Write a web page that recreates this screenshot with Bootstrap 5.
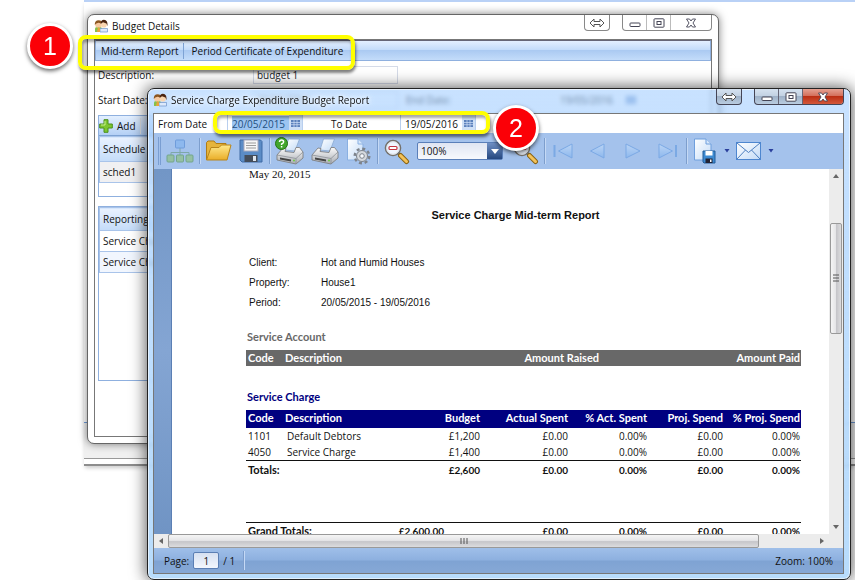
<!DOCTYPE html>
<html lang="en">
<head>
<meta charset="utf-8">
<meta name="viewport" content="width=device-width, initial-scale=1">
<title>Budget Details</title>
<link href="https://cdn.jsdelivr.net/npm/bootstrap@5.3.0/dist/css/bootstrap.min.css" rel="stylesheet">
<style>
  :root { --line: #8fb0df; --ui: "Open Sans", "Noto Sans", sans-serif; --calc: Lato, "Open Sans", sans-serif; }
  body { font-family: var(--ui); font-size: 10px; line-height: 16px; color: #111; background: #fff; }
  button, input, select { font: inherit; color: inherit; }
  svg { display: block; }
  .desk { min-height: 100vh; overflow: hidden; }
  .plain-btn { border: 0; background: none; padding: 0; }

  /* windows */
  .backwin { top: 0; left: 84px; right: 0; height: 466px; border-top: 2px solid #b9d1f6; border-bottom: 2px solid #8d8d8d; box-shadow: 0 3px 4px -1px #ccc; }
  .backwin-foot { height: 37px; border-top: 1px solid #6f9bd8; border-bottom: 1px solid #999; background: #f0f0f0; margin-bottom: 5px; }
  .win { border: 1px solid #444; border-radius: 7px; }
  .win-budget { top: 14px; left: 87px; right: 136px; height: 430px; background: #fff; border-color: #666; padding: 0 6px 6px; box-shadow: 0 0 8px rgba(0,0,0,.5); }
  .win-report { top: 88px; left: 147px; right: 4px; bottom: 0; padding: 0 6px 5px 5px; border-color: #222;
    background: linear-gradient(rgba(164,206,255,.6), rgba(172,212,255,.74) 25%, rgba(180,218,252,.95)); backdrop-filter: blur(2px);
    box-shadow: 0 0 16px 1px rgba(0,0,0,.65), inset 0 0 0 1px rgba(255,255,255,.6); }
  .titlebar { height: 24px; font-size: 10px; }
  .caption { padding-bottom: 2px; }
  .win-report .titlebar { text-shadow: 0 0 4px #fff, 0 0 6px #fff; }
  .client { border: 1px solid #777; background: #fff; min-height: 0; }
  .ctl { height: 16px; border: 1px solid #888; border-top: 0; border-radius: 0 0 4px 4px; overflow: hidden; }
  .ctl button { width: 24px; border-right: 1px solid #bbb; display: flex; align-items: center; justify-content: center; }
  .ctl button:last-child { border-right: 0; }
  .ctl .wide { width: 40px; }
  .glass { border-color: #445; background: linear-gradient(#d5e2f0, #c3d2e3 45%, #9fb2c8 50%, #b9cce0); }
  .glass button { border-color: #667; }
  .glass .close-red { background: linear-gradient(#e5a192, #d4705c 45%, #bb2f14 50%, #d3573a); }

  /* budget form */
  .menu-strip { height: 21px; border: 1px solid var(--line); border-top-color: #667; background: linear-gradient(#e3efff, #c4dcfa 45%, #abcaf2 50%, #c3dcfa); }
  .menu-strip .plain-btn { padding: 0 4px 0 5px; }
  .menu-strip .plain-btn + .plain-btn { border-left: 1px solid #7da2d4; padding-left: 8px; }
  .form-grid { display: grid; grid-template-columns: 155px 145px 162px auto; row-gap: 7px; align-items: center; padding: 5px 4px 0 3px; }
  .form-grid .form-control { height: 18px; padding: 0 3px; border: 1px solid #d5dbe8; border-radius: 0; font-size: 10px; line-height: 16px; }
  .panel { border: 1px solid var(--line); margin: 0 4px 0 3px; }
  .panel-tools { height: 20px; background: linear-gradient(#e3efff, #b4d0f5); border-bottom: 1px solid #7da2d4; }
  .list { width: 100%; margin: 0; }
  .list th, .list td { padding: 2px 3px; font-weight: 400; border: 1px solid #a9c4ea; }
  .list th { background: linear-gradient(#e9f2ff, #c4dcf9); padding-top: 3px; padding-bottom: 3px; }
  .list .alt { background: #f1f6fe; }
  .schedules { height: 82px; margin-top: 6px; }
  .schedules th { padding-top: 4px; padding-bottom: 4px; }
  .schedules .alt { background: #f0f0f2; }
  .reporting { height: 175px; margin-top: 9px; }

  /* report viewer */
  .range-row { height: 20px; }
  .range-row label:first-child { width: 73px; padding-left: 4px; }
  .range-row .to { width: 97px; padding-left: 28px; }
  .date-box { width: 76px; border: 1px solid #b9cfee; border-width: 0 1px; height: 18px; }
  .date-box input { width: 57px; border: 0; padding: 0; margin-left: 4px; height: 15px; }
  .date-box .picked { background: #9cc5f2; color: #24507f; }
  .date-box button { width: 14px; background: #cfe0f6; height: 100%; padding-left: 2px; }
  .tools { height: 36px; background: #a4c2ec; gap: 5px; padding-left: 4px; }
  .tools .plain-btn { flex: none; }
  .tools .pale { opacity: .7; }
  .grip { width: 3px; height: 28px; border: 1px solid #7a9ed2; border-width: 0 1px; }
  .rule { width: 1px; height: 26px; background: #7d9ecd; box-shadow: 1px 0 #c5d9f5; flex: none; }
  .zoom-box { width: 86px; height: 18px; border: 1px solid #5a7fb9; border-radius: 2px; margin-left: 2px; background: linear-gradient(#dfe5f2, #f7f9fd); }
  .zoom-box select { appearance: none; border: 0; background: none; padding: 0 3px; width: 68px; outline: 0; }
  .zoom-box span { width: 15px; background: linear-gradient(#6f8fc4, #25477f); }
  .canvas { background: linear-gradient(#7296c6, #84a5d3 50%, #7094c4); padding-left: 17px; border-right: 0; }
  .sheet { background: #fff; border-left: 1px solid #5b7fb4; padding: 0 28px 0 74px; }
  .stamp { font-family: "Liberation Serif", serif; font-size: 11px; line-height: 10px; padding-left: 3px; }
  .sheet h1 { font: bold 11px/16px "Liberation Sans", sans-serif; margin: 28px 0 32px; padding-right: 16px; }
  .facts { font-family: "Liberation Sans", sans-serif; font-size: 10px; display: grid; grid-template-columns: 72px auto; row-gap: 4px; line-height: 16px; padding-left: 3px; margin: 0; }
  .facts dt { font-weight: 400; }
  .facts dd { margin: 0; }
  .sheet h2 { font: bold 11px/14px var(--calc); margin: 19px 0 6px; padding-left: 1px; }
  .sheet .ink-gray { color: #686868; }
  .sheet .ink-navy { color: #000080; margin-top: 24px; }
  .ledger { width: 100%; table-layout: fixed; margin: 0; line-height: 16px; border-collapse: collapse; }
  .ledger th, .ledger td { padding: 0 2px; white-space: nowrap; }
  .ledger thead th { color: #fff; font: bold 11px/16px var(--calc); }
  .ledger .num:last-child { padding-right: 1px; }
  .gray thead { background: #686868; }
  .navy thead { background: #000080; }
  .navy thead tr { border-bottom: 2px solid #000080; }
  .ledger .num { text-align: right; }
  .ledger td:nth-child(2) { padding-left: 4px; }
  .sums { border-top: 1px solid #111; }
  .sums th { font: bold 11px/18px var(--calc); }
  .sums td { font: bold 10px/18px var(--calc); }
  .grand { margin-top: 43px; }
  .grand .sums th, .grand .sums td { line-height: 16px; }
  .c-code { width: 37px; } .c-budget { width: 80px; } .c-actual { width: 88px; }
  .c-pact { width: 79px; } .c-proj, .c-pproj { width: 76px; }
  .c-raised { width: 120px; } .c-paid { width: 200px; } .c-total { width: 124px; } .c-label { width: 100px; }

  /* scroll bars and status */
  .vbar { width: 14px; background: #ececec; flex: none; padding: 0 1px; }
  .hbar { height: 14px; background: #ececec; flex: none; padding-right: 14px; }
  .vbar button, .hbar button { width: 14px; height: 14px; display: flex; align-items: center; justify-content: center; flex: none; }
  .vbar button { width: 12px; }
  .gap-a { flex: 40; } .thumb-v { flex: 110; } .gap-b { flex: 187; }
  .thumb-v, .thumb-h { border: 1px solid #999; border-radius: 2px; display: flex; align-items: center; justify-content: center; }
  .thumb-v { background: linear-gradient(90deg, #f5f5f5, #e6e6e8 45%, #c6c6ca 55%, #dcdcde); }
  .thumb-h { flex: 591; background: linear-gradient(#f5f5f5, #e6e6e8 45%, #c6c6ca 55%, #dcdcde); }
  .gap-c { flex: 56; }
  .status { height: 25px; background: linear-gradient(#9fbfe9, #8db0df 48%, #7fa3d3 52%, #86a8d6); padding: 0 10px; }
  .status input { width: 26px; height: 17px; border: 1px solid #5b7fb4; border-radius: 2px; background: linear-gradient(#d6e0f1, #f3f7fd); text-align: center; padding: 0; }

  /* callouts */
  .ring { border: 4px solid #ff0; border-radius: 8px; box-shadow: 1px 3px 3px rgba(0,0,0,.5), inset 1px 3px 3px rgba(0,0,0,.35); pointer-events: none; }
  .ring-one { left: 78px; top: 35px; width: 277px; height: 35px; }
  .ring-two { left: 213px; top: 111px; width: 277px; height: 23px; }
  .step { width: 46px; height: 46px; border-radius: 50%; border: 3px solid #fff; background: #fb0007; color: #fff; font: 25px/40px "Liberation Sans", sans-serif; text-align: center; box-shadow: 0 2px 4px rgba(0,0,0,.6); }
  .step-one { left: 27px; top: 23px; }
  .step-two { left: 493px; top: 105px; }
</style>
<script src="https://cdn.jsdelivr.net/npm/bootstrap@5.3.0/dist/js/bootstrap.bundle.min.js"></script>
</head>
<body>
<svg width="0" height="0" class="position-absolute" aria-hidden="true">
  <defs>
    <linearGradient id="gPaper" x1="0" y1="0" x2="1" y2="1"><stop offset="0" stop-color="#fff"/><stop offset="1" stop-color="#c3dbf7"/></linearGradient>
    <linearGradient id="gBlue" x1="0" y1="0" x2="0" y2="1"><stop offset="0" stop-color="#c6defa"/><stop offset="1" stop-color="#83b3ee"/></linearGradient>
    <linearGradient id="gGold" x1="0" y1="0" x2="0" y2="1"><stop offset="0" stop-color="#ffe98c"/><stop offset="1" stop-color="#e9ad27"/></linearGradient>
    <linearGradient id="gSteel" x1="0" y1="0" x2="0" y2="1"><stop offset="0" stop-color="#fafafa"/><stop offset="1" stop-color="#a9adb3"/></linearGradient>
    <symbol id="people" viewBox="0 0 14 14">
      <path d="M1 13V9.500Q1 8 3 8h3q2 0 2 2v3z" fill="#86c04c"/><circle cx="4.500" cy="5.500" r="3.300" fill="#f6c9a0"/>
      <path d="M.8 6Q.5 1.200 4.700 1.200 8 1.200 8 4.500L4.500 3.800Q2 4 .8 6z" fill="#8a5520"/>
      <circle cx="9.800" cy="5.500" r="3.100" fill="#f9d5b0"/><path d="M6.600 5Q6.800.8 10 .8q4 0 3.600 6.500L12.400 4.500 9 3.300z" fill="#4a2410"/>
      <path d="M6 13V9.500h7.500V13z" fill="#dce9fb" stroke="#6f93c8" stroke-width=".7"/><path d="M4 8l2 1.500V13H3z" fill="#e8a33d"/>
    </symbol>
    <symbol id="cal" viewBox="0 0 9 9"><path d="M0 1h9v7H0z" fill="#5c82bd"/><path d="M0 3.500h9M0 5.700h9M3 1v7M6 1v7" stroke="#cfe0f6" stroke-width=".7"/></symbol>
    <symbol id="swap" viewBox="0 0 16 10"><path d="M1 5l4-4v2.500h6V1l4 4-4 4V6.500H5V9z" fill="#fff" stroke="#555" stroke-width="1"/></symbol>
    <symbol id="mini" viewBox="0 0 12 10"><rect x="1" y="5" width="10" height="3.500" rx=".8" fill="#fff" stroke="#445" stroke-width="1"/></symbol>
    <symbol id="maxi" viewBox="0 0 12 10"><rect x="1" y=".8" width="10" height="8.400" rx=".8" fill="#fff" stroke="#445"/><rect x="4" y="3.500" width="4" height="3" fill="#fff" stroke="#445"/></symbol>
    <symbol id="shut" viewBox="0 0 12 10"><path d="M1.500 1h3L6 3l1.500-2h3L8 5l2.500 4h-3L6 7 4.500 9h-3L4 5z" fill="#fff" stroke="#445" stroke-width=".9"/></symbol>
    <symbol id="printer" viewBox="0 0 30 28">
      <path d="M10 13L13.500 2h11L20 14z" fill="url(#gPaper)" stroke="#8aa9d0" stroke-width=".8"/>
      <path d="M2 18l6-7 3 .5-1 3 9 1 2-5h3.500L28 15v6l-7 6L2 23z" fill="url(#gSteel)" stroke="#777" stroke-width=".8"/>
      <path d="M2 18l19 3.500L28 15M21 21.500V27" stroke="#8b8f95" fill="none" stroke-width=".8"/><path d="M5 20.500l11 2v2l-11-2z" fill="#444"/><circle cx="19" cy="23.500" r=".9" fill="#6c3"/>
    </symbol>
    <symbol id="lens" viewBox="0 0 27 27"><path d="M15 15l3 3" stroke="#666" stroke-width="3"/><path d="M17.500 17.500l6 6" stroke="#8a6414" stroke-width="5" stroke-linecap="round"/><path d="M17.500 17.500l6 6" stroke="#f3c25a" stroke-width="3" stroke-linecap="round"/><circle cx="10" cy="10" r="7.500" fill="#eff6ff" stroke="#74716c" stroke-width="1.600"/><circle cx="10" cy="10" r="6.300" fill="none" stroke="#d8dde4"/><rect x="6" y="8.500" width="8" height="3" rx="1" fill="#fff" stroke="#c33540" stroke-width="1.200"/></symbol>
    <symbol id="tri" viewBox="0 0 29 18"><path d="M20 2v14L6.500 9z" fill="url(#gBlue)" stroke="#6b9fe2" stroke-linejoin="round"/></symbol>
  </defs>
</svg>

<main class="desk position-relative">
  <div class="backwin position-absolute d-flex flex-column justify-content-end"><div class="backwin-foot"></div></div>

  <section class="win win-budget position-absolute d-flex flex-column">
    <header class="titlebar d-flex">
      <div class="caption d-flex align-items-center flex-grow-1 gap-1"><svg width="14" height="14"><use href="#people"/></svg><span>Budget Details</span></div>
      <div class="ctl d-flex me-2"><button class="plain-btn" aria-label="Move"><svg width="16" height="10"><use href="#swap"/></svg></button></div>
      <div class="ctl d-flex ms-1"><button class="plain-btn" aria-label="Minimise"><svg width="12" height="10"><use href="#mini"/></svg></button><button class="plain-btn" aria-label="Maximise"><svg width="12" height="10"><use href="#maxi"/></svg></button><button class="plain-btn wide" aria-label="Close"><svg width="12" height="10"><use href="#shut"/></svg></button></div>
    </header>
    <div class="client flex-grow-1">
      <nav class="menu-strip d-flex align-items-center"><button class="plain-btn">Mid-term Report</button><button class="plain-btn">Period Certificate of Expenditure</button></nav>
      <div class="form-grid">
        <label for="desc">Description:</label><input id="desc" class="form-control" value="budget 1"><span></span><span></span>
        <label for="start">Start Date:</label><input id="start" class="form-control" value="20/05/2015"><label for="end" class="ps-2">End Date:</label>
        <div class="d-flex align-items-center"><input id="end" class="plain-btn" size="9" value="19/05/2016"><svg width="10" height="10"><use href="#cal"/></svg></div>
      </div>
      <div class="panel schedules">
        <div class="panel-tools d-flex align-items-center"><button class="plain-btn d-flex align-items-center gap-1 pe-1 border-end"><svg width="14" height="14" viewBox="0 0 14 14"><path d="M5 .7h4V5h4.300v4H9v4.300H5V9H.7V5H5z" fill="#7cc62f" stroke="#4b8f1d"/><path d="M6 2v4H2" stroke="#c7ee8f" fill="none"/></svg>Add</button></div>
        <table class="list"><thead><tr><th>Schedule</th></tr></thead><tbody><tr><td class="alt">sched1</td></tr></tbody></table>
      </div>
      <div class="panel reporting">
        <table class="list"><thead><tr><th>Reporting</th></tr></thead><tbody><tr><td>Service Charge</td></tr><tr><td class="alt">Service Charge</td></tr></tbody></table>
      </div>
    </div>
  </section>

  <section class="win win-report position-absolute d-flex flex-column">
    <header class="titlebar d-flex">
      <div class="caption d-flex align-items-center flex-grow-1 gap-1"><svg width="14" height="14"><use href="#people"/></svg><span>Service Charge Expenditure Budget Report</span></div>
      <div class="ctl glass d-flex me-2"><button class="plain-btn" aria-label="Move"><svg width="16" height="10"><use href="#swap"/></svg></button></div>
      <div class="ctl glass d-flex ms-1"><button class="plain-btn" aria-label="Minimise"><svg width="12" height="10"><use href="#mini"/></svg></button><button class="plain-btn" aria-label="Maximise"><svg width="12" height="10"><use href="#maxi"/></svg></button><button class="plain-btn wide close-red" aria-label="Close"><svg width="12" height="10"><use href="#shut"/></svg></button></div>
    </header>
    <div class="client flex-grow-1 d-flex flex-column">
      <div class="range-row d-flex align-items-center">
        <label for="from">From Date</label>
        <div class="date-box d-flex align-items-center justify-content-between"><input id="from" class="picked" value="20/05/2015"><button class="plain-btn" aria-label="Pick from date"><svg width="9" height="9"><use href="#cal"/></svg></button></div>
        <label for="until" class="to">To Date</label>
        <div class="date-box d-flex align-items-center justify-content-between"><input id="until" value="19/05/2016"><button class="plain-btn" aria-label="Pick to date"><svg width="9" height="9"><use href="#cal"/></svg></button></div>
      </div>
      <div class="tools d-flex align-items-center" role="toolbar" aria-label="Report">
        <span class="grip"></span>
        <button class="plain-btn" aria-label="Document map"><svg width="28" height="26" viewBox="0 0 28 26"><path d="M14 10v4M5 18v-3.500h18V18M14 14v4" fill="none" stroke="#7ea8a8"/><rect x="9.500" y="2" width="9" height="8" rx="1" fill="#8db8ee" stroke="#6f9cdb"/><g fill="#95c0a4" stroke="#72a58c"><rect x="1" y="17" width="7" height="7" rx="1"/><rect x="10.500" y="17" width="7" height="7" rx="1"/><rect x="20" y="17" width="7" height="7" rx="1"/></g></svg></button>
        <span class="rule"></span>
        <button class="plain-btn" aria-label="Open"><svg width="27" height="26" viewBox="0 0 27 26"><path d="M1.500 22V4.500L3 3h6l2 2.500h10V9" fill="#e6b43c" stroke="#b17c14"/><path d="M1.500 22L6 9.500h8L16.500 7H26l-4 15z" fill="url(#gGold)" stroke="#b9851a" stroke-linejoin="round"/></svg></button>
        <button class="plain-btn" aria-label="Save"><svg width="27" height="26" viewBox="0 0 27 26"><path d="M3 2h20.500L25 3.500V24H5l-2-2z" fill="#5b8cc6" stroke="#3e6ba5"/><rect x="7" y="2" width="14" height="11" fill="#f7f7f7" stroke="#aab"/><path d="M9 5h10M9 7.500h10M9 10h10" stroke="#9a9a9a"/><rect x="7.500" y="17" width="13" height="7" fill="#444d5a"/><rect x="16" y="18" width="3" height="5" fill="#dfe6ee"/></svg></button>
        <span class="rule"></span>
        <button class="plain-btn" aria-label="Print"><svg width="30" height="28" viewBox="0 0 30 28"><use href="#printer" width="30" height="28"/><circle cx="6.500" cy="6.500" r="6" fill="#42a62c" stroke="#247312"/><path d="M4.500 5Q4.600 3 6.600 3t2 2Q8.500 6.200 6.600 7v1M6.600 9v1.500" fill="none" stroke="#fff" stroke-width="1.500"/></svg></button>
        <button class="plain-btn" aria-label="Quick print"><svg width="30" height="28"><use href="#printer"/></svg></button>
        <button class="plain-btn" aria-label="Page setup"><svg width="27" height="28" viewBox="0 0 27 28"><path d="M2.500 2H13l5 5v16H2.500z" fill="url(#gPaper)" stroke="#8ab0e2"/><path d="M13 2v5h5" fill="#d7e7fa" stroke="#8ab0e2"/><circle cx="17" cy="19" r="7.300" fill="none" stroke="#7d838b" stroke-width="2.400" stroke-dasharray="3 2.730"/><circle cx="17" cy="19" r="5.500" fill="#d5d9de" stroke="#7d838b"/><circle cx="17" cy="19" r="2.300" fill="#f6f9fd" stroke="#7d838b"/></svg></button>
        <span class="rule"></span>
        <button class="plain-btn" aria-label="Zoom out"><svg width="27" height="27"><use href="#lens"/></svg></button>
        <div class="zoom-box d-flex align-items-stretch flex-shrink-0"><select aria-label="Zoom"><option>100%</option></select><span class="ms-auto d-flex align-items-center justify-content-center"><svg width="8" height="5" viewBox="0 0 8 5"><path d="M0 0h8L4 5z" fill="#fff"/></svg></span></div>
        <button class="plain-btn ms-1" aria-label="Zoom in"><svg width="27" height="27"><use href="#lens"/></svg></button>
        <span class="rule"></span>
        <button class="plain-btn pale" aria-label="First page"><svg width="29" height="18" viewBox="0 0 29 18"><path d="M4.500 3v12" stroke="#6b9fe2" stroke-width="2"/><path d="M22 2v14L8.500 9z" fill="url(#gBlue)" stroke="#6b9fe2"/></svg></button>
        <button class="plain-btn pale" aria-label="Previous page"><svg width="29" height="18"><use href="#tri"/></svg></button>
        <button class="plain-btn pale" aria-label="Next page"><svg width="29" height="18" viewBox="0 0 29 18"><path d="M8 2v14l14-7z" fill="url(#gBlue)" stroke="#6b9fe2"/></svg></button>
        <button class="plain-btn pale" aria-label="Last page"><svg width="29" height="18" viewBox="0 0 29 18"><path d="M7 2v14l13.500-7z" fill="url(#gBlue)" stroke="#6b9fe2"/><path d="M24 3v12" stroke="#6b9fe2" stroke-width="2"/></svg></button>
        <span class="rule"></span>
        <button class="plain-btn" aria-label="Export"><svg width="27" height="28" viewBox="0 0 27 28"><path d="M2.500 2H14l5 5v16H2.500z" fill="url(#gPaper)" stroke="#6f9fdd"/><path d="M14 2v5h5" fill="#d7e7fa" stroke="#6f9fdd"/><path d="M11 14h12v12H12l-1-1z" fill="#3d8ad2" stroke="#235c99"/><path d="M13.500 14h7v4.500h-7z" fill="#fff"/><path d="M13.500 21.500h7V26h-7z" fill="#223"/><path d="M18 22.500h1.500V25H18z" fill="#fff"/></svg></button>
        <button class="plain-btn" aria-label="Export options"><svg width="6" height="4" viewBox="0 0 6 4"><path d="M.5 0h5L3 3.500z" fill="#2a3f9c"/></svg></button>
        <button class="plain-btn" aria-label="E-mail"><svg width="28" height="20" viewBox="0 0 28 20"><rect x="1.500" y="1.500" width="24" height="17" fill="url(#gPaper)" stroke="#4d86cf"/><path d="M2 2l11.500 9.500L25 2M2 18l8.500-9M25 18l-8.500-9" fill="none" stroke="#4d7fc0"/></svg></button>
        <button class="plain-btn" aria-label="E-mail options"><svg width="6" height="4" viewBox="0 0 6 4"><path d="M.5 0h5L3 3.500z" fill="#2a3f9c"/></svg></button>
      </div>
      <div class="d-flex flex-grow-1 overflow-hidden">
        <div class="canvas flex-grow-1 d-flex overflow-hidden">
          <article class="sheet flex-grow-1">
            <div class="stamp">May 20, 2015</div>
            <h1 class="text-center">Service Charge Mid-term Report</h1>
            <dl class="facts"><dt>Client:</dt><dd>Hot and Humid Houses</dd><dt>Property:</dt><dd>House1</dd><dt>Period:</dt><dd>20/05/2015 - 19/05/2016</dd></dl>
            <h2 class="ink-gray">Service Account</h2>
            <table class="ledger gray">
              <colgroup><col class="c-code"><col><col class="c-raised"><col class="c-paid"></colgroup>
              <thead><tr><th>Code</th><th>Description</th><th class="num">Amount Raised</th><th class="num">Amount Paid</th></tr></thead>
            </table>
            <h2 class="ink-navy">Service Charge</h2>
            <table class="ledger navy">
              <colgroup><col class="c-code"><col><col class="c-budget"><col class="c-actual"><col class="c-pact"><col class="c-proj"><col class="c-pproj"></colgroup>
              <thead><tr><th>Code</th><th>Description</th><th class="num">Budget</th><th class="num">Actual Spent</th><th class="num">% Act. Spent</th><th class="num">Proj. Spend</th><th class="num">% Proj. Spend</th></tr></thead>
              <tbody>
                <tr><td>1101</td><td>Default Debtors</td><td class="num">£1,200</td><td class="num">£0.00</td><td class="num">0.00%</td><td class="num">£0.00</td><td class="num">0.00%</td></tr>
                <tr><td>4050</td><td>Service Charge</td><td class="num">£1,400</td><td class="num">£0.00</td><td class="num">0.00%</td><td class="num">£0.00</td><td class="num">0.00%</td></tr>
              </tbody>
              <tfoot><tr class="sums"><th colspan="2">Totals:</th><td class="num">£2,600</td><td class="num">£0.00</td><td class="num">0.00%</td><td class="num">£0.00</td><td class="num">0.00%</td></tr></tfoot>
            </table>
            <table class="ledger grand">
              <colgroup><col class="c-label"><col><col class="c-total"><col class="c-pact"><col class="c-proj"><col class="c-pproj"></colgroup>
              <tbody><tr class="sums"><th>Grand Totals:</th><td class="num">£2,600.00</td><td class="num">£0.00</td><td class="num">0.00%</td><td class="num">£0.00</td><td class="num">0.00%</td></tr></tbody>
            </table>
          </article>
        </div>
        <div class="vbar d-flex flex-column">
          <button class="plain-btn" aria-label="Scroll up"><svg width="6" height="4" viewBox="0 0 6 4"><path d="M3 0l3 4H0z" fill="#666"/></svg></button>
          <div class="gap-a"></div><div class="thumb-v"><svg width="6" height="8" viewBox="0 0 6 8"><path d="M0 1h6M0 4h6M0 7h6" stroke="#555"/></svg></div><div class="gap-b"></div>
          <button class="plain-btn" aria-label="Scroll down"><svg width="6" height="4" viewBox="0 0 6 4"><path d="M3 4l3-4H0z" fill="#666"/></svg></button>
        </div>
      </div>
      <div class="hbar d-flex">
        <button class="plain-btn" aria-label="Scroll left"><svg width="4" height="6" viewBox="0 0 4 6"><path d="M0 3l4-3v6z" fill="#666"/></svg></button>
        <div class="thumb-h"><svg width="8" height="6" viewBox="0 0 8 6"><path d="M1 0v6M4 0v6M7 0v6" stroke="#555"/></svg></div><div class="gap-c"></div>
        <button class="plain-btn" aria-label="Scroll right"><svg width="4" height="6" viewBox="0 0 4 6"><path d="M4 3L0 0v6z" fill="#666"/></svg></button>
      </div>
      <footer class="status d-flex align-items-center gap-1 flex-shrink-0">
        <label for="page">Page:</label><input id="page" value="1"><span>/ 1</span><span class="rule ms-1 h-75"></span><span class="ms-auto">Zoom: 100%</span>
      </footer>
    </div>
  </section>

  <div class="ring ring-one position-absolute"></div>
  <div class="ring ring-two position-absolute"></div>
  <div class="step step-one position-absolute">1</div>
  <div class="step step-two position-absolute">2</div>
</main>
</body>
</html>
